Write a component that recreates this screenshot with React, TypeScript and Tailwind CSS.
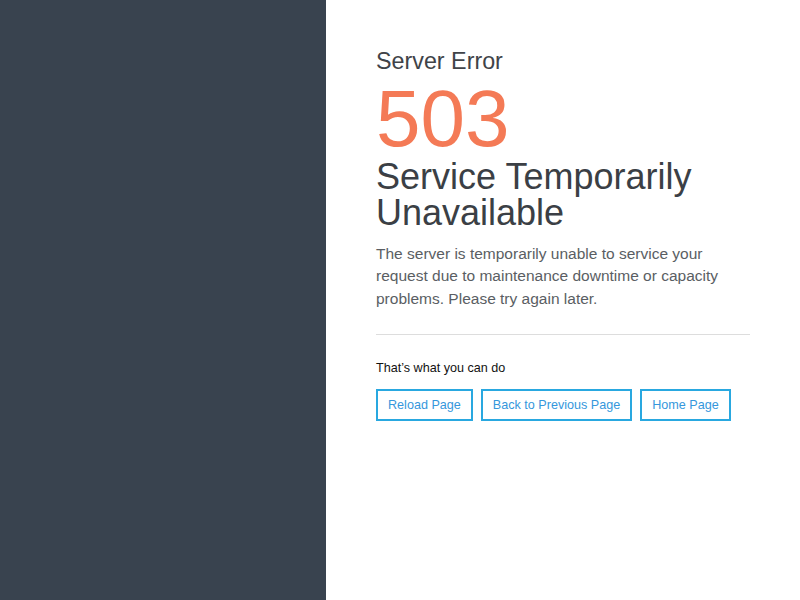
import React from "react";

const actions = ["Reload Page", "Back to Previous Page", "Home Page"];

export default function App() {
  return (
    <div className="flex h-screen w-full font-['Liberation_Sans',Arial,sans-serif]">
      <div className="w-[326px] shrink-0 bg-[#39434f]" />
      <div className="flex-1 bg-white pl-[50px] pr-[50px] pt-[47px]">
        <h2 className="text-[23.3px] leading-[28px] text-[#404348]">Server Error</h2>
        <h1 className="mt-2 mb-1 text-[80px] leading-[72px] text-[#f47a56]">503</h1>
        <h3 className="text-[36px] leading-[36px] text-[#3b3f45]">
          Service Temporarily Unavailable
        </h3>
        <p className="mt-[12px] text-[15.5px] leading-[22.4px] text-[#5a5e63]">
          The server is temporarily unable to service your request due to
          maintenance downtime or capacity problems. Please try again later.
        </p>
        <hr className="mt-[24px] border-0 border-t border-[#dddddd]" />
        <p className="mt-[25px] text-[12.6px] leading-[16px] text-[#111111]">
          That’s what you can do
        </p>
        <div className="mt-[13px] flex gap-2">
          {actions.map((a) => (
            <a
              key={a}
              href="#"
              className="flex h-8 items-center border-2 border-[#29a8e0] px-[10px] text-[12.6px] text-[#3597dc]"
            >
              {a}
            </a>
          ))}
        </div>
      </div>
    </div>
  );
}
